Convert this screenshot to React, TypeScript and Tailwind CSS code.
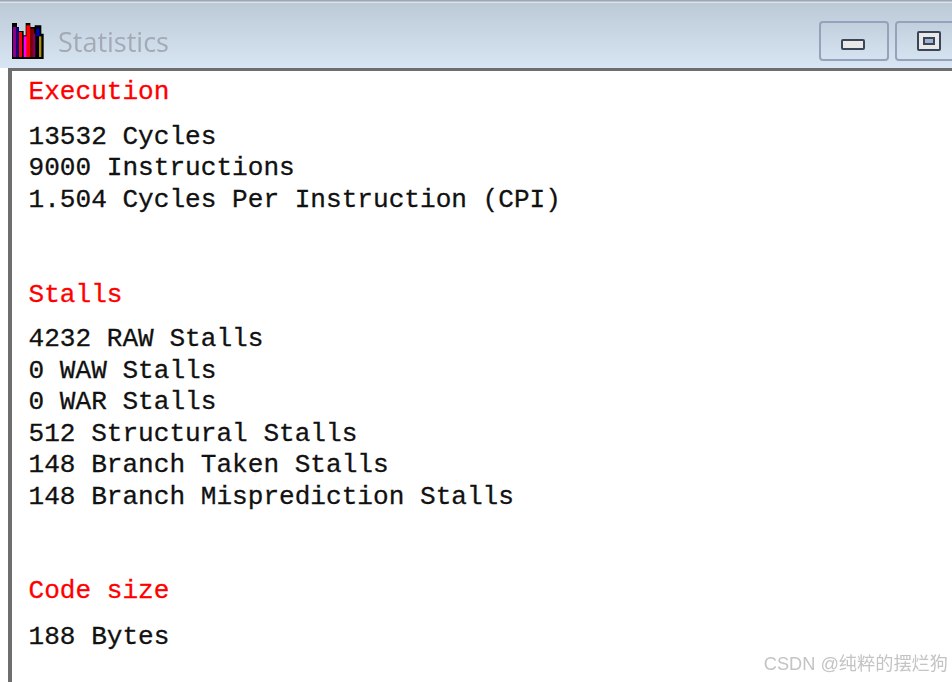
const Heading = ({ children, mt }: { children: string; mt: string }) => (
  <div className={`h-[31.5px] leading-[31.5px] text-[#ff0000] ${mt}`}>{children}</div>
);
const Line = ({ children }: { children: string }) => (
  <div className="h-[31.5px] leading-[31.5px] text-[#111]">{children}</div>
);

export default function App() {
  return (
    <div className="relative h-[682px] w-[952px] overflow-hidden bg-white font-['Liberation_Mono',monospace]">
      <div className="h-[3px] bg-gradient-to-b from-[#8a98a8] to-[#eef2f6]" />
      <div className="flex h-[65px] items-start bg-gradient-to-b from-[#bccad8] to-[#d8e5f3] pl-[12px]">
        <svg width="32" height="36" viewBox="37 68 96 108" className="mt-[20px] shrink-0">
          <polygon
            fill="#000"
            points="37,68 52,68 52,80 58,80 58,92 72,92 72,105 78,105 78,68 92,68 92,80 105,80 105,75 125,75 125,100 132,100 132,176 37,176"
          />
          <rect x="40" y="80" width="10" height="90" fill="#8a008a" />
          <rect x="52" y="82" width="5" height="88" fill="#0000c0" />
          <rect x="58" y="95" width="9" height="75" fill="#ff0000" />
          <rect x="72" y="108" width="10" height="62" fill="#ff00ff" />
          <rect x="80" y="75" width="12" height="95" fill="#ff0000" />
          <rect x="92" y="85" width="11" height="85" fill="#800000" />
          <rect x="100" y="100" width="7" height="70" fill="#800060" />
          <rect x="110" y="85" width="9" height="23" fill="#0000c0" />
          <rect x="118" y="108" width="7" height="62" fill="#b09000" />
        </svg>
        <span className="ml-[14px] mt-[21px] font-['Open_Sans',sans-serif] text-[27px] leading-[36px] text-[#a3aab3] blur-[0.4px]">
          Statistics
        </span>
        <div className="ml-auto mt-[18px] flex gap-[6px]">
          <div className="flex h-[40px] w-[70px] items-center justify-center rounded-[4px] border-2 border-[#95a2bb] bg-gradient-to-b from-[#c2cfdd] to-[#d5e2f0]">
            <div className="mt-[6px] h-[11px] w-[24px] -translate-x-[1px] rounded-[2px] border-2 border-[#3c4458] bg-[#e8e8e8]" />
          </div>
          <div className="-mr-[14px] flex h-[40px] w-[71px] items-center rounded-[4px] border-2 border-[#95a2bb] bg-gradient-to-b from-[#c2cfdd] to-[#d5e2f0] pl-[20px]">
            <div className="flex h-[20px] w-[24px] items-center justify-center rounded-[2px] border-2 border-[#3c4458] bg-[#e8e8e8]">
              <div className="h-[8px] w-[12px] border-2 border-[#3c4458] bg-[#9fb4d0]" />
            </div>
          </div>
        </div>
      </div>
      <div className="ml-[8px] h-[614px] border-l-[4px] border-t-[3px] border-[#6e6e6e] bg-white pl-[16.5px] pt-[6px] text-[26.1px] [-webkit-text-stroke:0.3px]">
        <Heading mt="">Execution</Heading>
        <div className="mt-[13px]">
          <Line>13532 Cycles</Line>
          <Line>9000 Instructions</Line>
          <Line>1.504 Cycles Per Instruction (CPI)</Line>
        </div>
        <Heading mt="mt-[63.5px]">Stalls</Heading>
        <div className="mt-[13px]">
          <Line>4232 RAW Stalls</Line>
          <Line>0 WAW Stalls</Line>
          <Line>0 WAR Stalls</Line>
          <Line>512 Structural Stalls</Line>
          <Line>148 Branch Taken Stalls</Line>
          <Line>148 Branch Misprediction Stalls</Line>
        </div>
        <Heading mt="mt-[63px]">Code size</Heading>
        <div className="mt-[14px]">
          <Line>188 Bytes</Line>
        </div>
      </div>
      <div className="absolute bottom-[6px] right-[4px] font-['Liberation_Sans','Noto_Sans_CJK_SC',sans-serif] text-[18.2px] leading-[24px] text-[#c4c4c4] blur-[0.4px]">
        CSDN @纯粹的摆烂狗
      </div>
    </div>
  );
}
